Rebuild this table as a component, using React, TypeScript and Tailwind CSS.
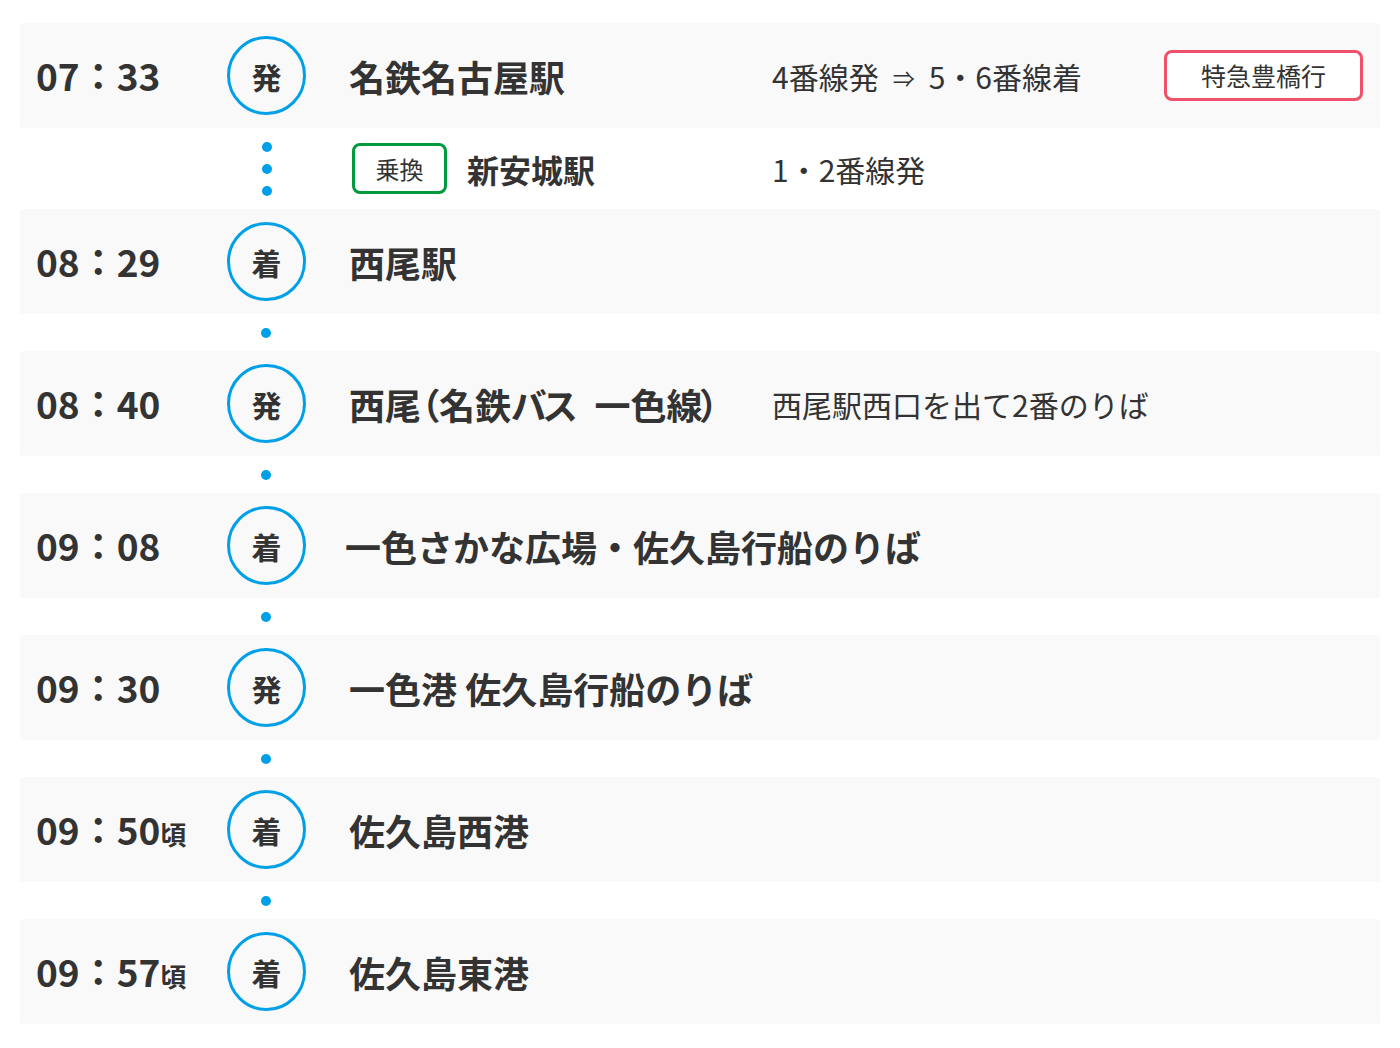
import React from "react";

type Stop = {
  time: string;
  approx?: boolean;
  kind: "発" | "着";
  name: React.ReactNode;
  shift?: boolean;
  platform?: React.ReactNode;
  badge?: string;
};

const stops: Stop[] = [
  {
    time: "07：33",
    kind: "発",
    name: "名鉄名古屋駅",
    platform: (
      <>
        4番線発<span className="inline-block mx-[14px] text-[22px] align-[2px]">⇒</span>5・6番線着
      </>
    ),
    badge: "特急豊橋行",
  },
  { time: "08：29", kind: "着", name: "西尾駅" },
  {
    time: "08：40",
    kind: "発",
    name: (
      <span className="[font-feature-settings:'palt']">
        西尾（名鉄<span className="tracking-[-3px]">バス</span>
        <span className="ml-[20px]">一色線</span>
        <span className="-ml-[2px]">）</span>
      </span>
    ),
    platform: "西尾駅西口を出て2番のりば",
  },
  { time: "09：08", kind: "着", name: "一色さかな広場・佐久島行船のりば", shift: true },
  { time: "09：30", kind: "発", name: "一色港 佐久島行船のりば" },
  { time: "09：50", approx: true, kind: "着", name: "佐久島西港" },
  { time: "09：57", approx: true, kind: "着", name: "佐久島東港" },
];

const font = { fontFamily: '"Noto Sans CJK JP", "Noto Sans", sans-serif' };

function Dot() {
  return <span className="block w-[10px] h-[10px] rounded-full bg-[#00a0e9]" />;
}

function Row({ s }: { s: Stop }) {
  return (
    <div className="flex items-center h-[105px] bg-[#f9f9f9] rounded pl-4 pr-[17px]">
      <div className="w-[191px] text-[37px] font-bold text-[#333] leading-none flex items-baseline">
        <span>{s.time}</span>
        {s.approx && <span className="text-[26px]">頃</span>}
      </div>
      <div className="w-[79px] h-[79px] shrink-0 rounded-full border-[3px] border-[#00a0e9] flex items-center justify-center text-[30px] font-bold text-[#333] leading-none">
        {s.kind}
      </div>
      <div
        className={
          s.shift
            ? "ml-[39px] w-[427px] shrink-0 text-[36px] font-bold text-[#333] leading-none whitespace-nowrap"
            : "ml-[43px] w-[423px] shrink-0 text-[36px] font-bold text-[#333] leading-none whitespace-nowrap"
        }
      >
        {s.name}
      </div>
      <div className="flex-1 text-[30px] text-[#333] leading-none whitespace-nowrap">{s.platform ?? ""}</div>
      {s.badge && (
        <div className="w-[199px] h-[51px] border-[3px] border-[#f0506a] rounded-lg flex items-center justify-center text-[25px] text-[#333] leading-none bg-white">
          {s.badge}
        </div>
      )}
    </div>
  );
}

function Gap() {
  return (
    <div className="h-[37px] flex items-center pl-[241px]">
      <Dot />
    </div>
  );
}

export default function App() {
  return (
    <div className="bg-white min-h-[1048px] px-5 pt-[23px]" style={font}>
      <Row s={stops[0]} />
      <div className="flex items-center h-[81px]">
        <div className="w-[79px] ml-[207px] flex flex-col items-center gap-3">
          <Dot />
          <Dot />
          <Dot />
        </div>
        <div className="ml-[46px] w-[95px] h-[51px] border-[3px] border-[#009a3e] rounded-lg flex items-center justify-center text-[24px] text-[#333] leading-none">
          乗換
        </div>
        <div className="ml-5 w-[305px] text-[32px] font-bold text-[#333] leading-none">新安城駅</div>
        <div className="text-[30px] text-[#333] leading-none">1・2番線発</div>
      </div>
      {stops.slice(1).map((s, i) => (
        <React.Fragment key={i}>
          {i > 0 && <Gap />}
          <Row s={s} />
        </React.Fragment>
      ))}
    </div>
  );
}
